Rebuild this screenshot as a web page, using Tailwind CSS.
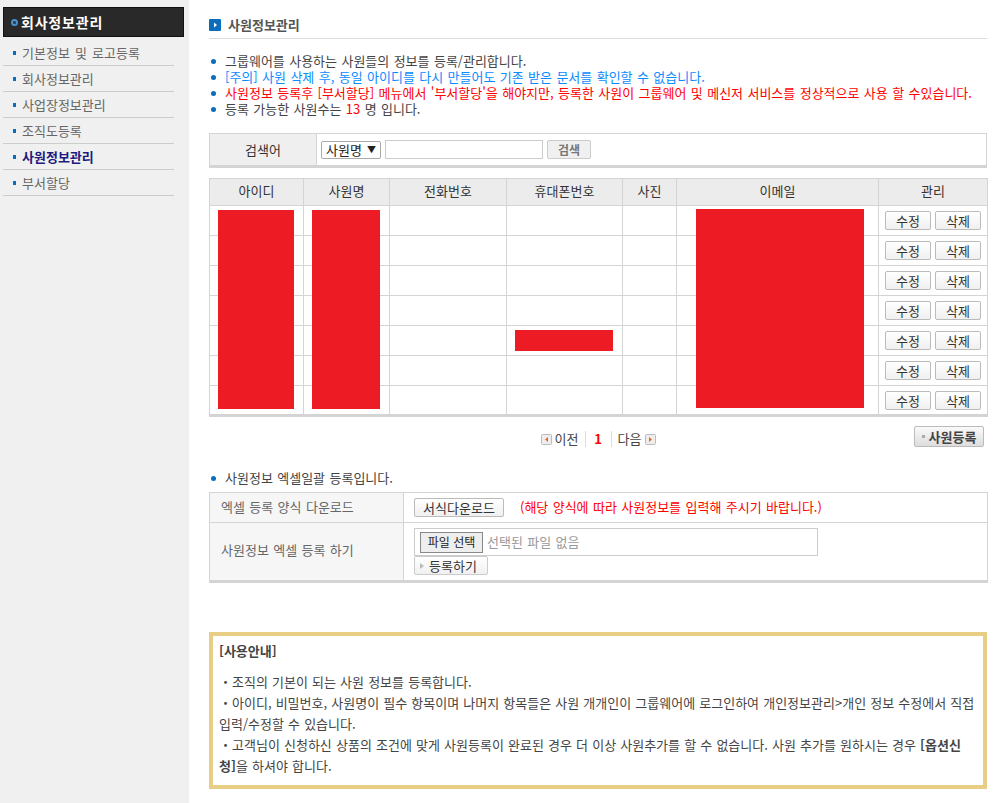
<!DOCTYPE html>
<html lang="ko"><head><meta charset="utf-8"><title>사원정보관리</title>
<script src="https://cdn.jsdelivr.net/npm/@tailwindcss/browser@4"></script></head>
<body class="bg-white">
<div class="flex w-[1005px] h-[803px] overflow-hidden bg-white text-[13px] leading-4 text-[#444] font-['Noto_Sans_CJK_KR','Noto_Sans',sans-serif] [word-spacing:0.75px]">
<aside class="w-[189px] shrink-0 bg-[#f0f0f0] pt-[7px] pl-[3px]">
  <div class="w-[181px] h-[30px] bg-[#292929] border border-[#111] flex items-center pl-[7px] gap-[3px] text-white font-bold text-[14px]">
    <span class="w-[7px] h-[7px] rounded-full border-2 border-[#4a90c8] bg-[#24364a]"></span><span class="tracking-[0.8px]">회사정보관리</span>
  </div>
  <ul class="w-[171px] mt-[3px] text-[#666] [word-spacing:1.5px]">
    <li class="h-[26px] border-b border-[#ccc] flex items-center pl-[10px] gap-[6px]"><span class="w-[3px] h-[4px] bg-[#0a6ebd]"></span>기본정보 및 로고등록</li>
    <li class="h-[26px] border-b border-[#ccc] flex items-center pl-[10px] gap-[6px]"><span class="w-[3px] h-[4px] bg-[#0a6ebd]"></span>회사정보관리</li>
    <li class="h-[26px] border-b border-[#ccc] flex items-center pl-[10px] gap-[6px]"><span class="w-[3px] h-[4px] bg-[#0a6ebd]"></span>사업장정보관리</li>
    <li class="h-[26px] border-b border-[#ccc] flex items-center pl-[10px] gap-[6px]"><span class="w-[3px] h-[4px] bg-[#0a6ebd]"></span>조직도등록</li>
    <li class="h-[26px] border-b border-[#ccc] flex items-center pl-[10px] gap-[6px] font-bold text-[#1c1c80]"><span class="w-[3px] h-[4px] bg-[#0a6ebd]"></span>사원정보관리</li>
    <li class="h-[26px] border-b border-[#ccc] flex items-center pl-[10px] gap-[6px]"><span class="w-[3px] h-[4px] bg-[#0a6ebd]"></span>부서할당</li>
  </ul>
</aside>
<main class="relative w-[778px] ml-[20px] shrink-0">
  <div class="h-[39px] border-b border-[#ddd] flex items-center gap-[7px] pt-[11px] font-bold text-[#555]">
    <svg class="w-[12px] h-[12px]" viewBox="0 0 12 12"><rect width="12" height="12" rx="1" fill="#0a6ebd"/><path d="M5 3.5 8 6 5 8.5Z" fill="#fff"/></svg>
    <span>사원정보관리</span>
  </div>
  <ul class="mt-[14px] h-[64px]">
    <li class="flex items-center h-4 gap-[9px]"><span class="ml-[2px] shrink-0 w-[5px] h-[5px] rounded-full bg-[#0a6ebd]"></span><span>그룹웨어를 사용하는 사원들의 정보를 등록/관리합니다.</span></li>
    <li class="flex items-center h-4 gap-[9px] text-[#0a8cff]"><span class="ml-[2px] shrink-0 w-[5px] h-[5px] rounded-full bg-[#0a6ebd]"></span><span>[주의] 사원 삭제 후, 동일 아이디를 다시 만들어도 기존 받은 문서를 확인할 수 없습니다.</span></li>
    <li class="flex items-center h-4 gap-[9px] text-[#ff0000] whitespace-nowrap"><span class="ml-[2px] shrink-0 w-[5px] h-[5px] rounded-full bg-[#0a6ebd]"></span><span>사원정보 등록후 [부서할당] 메뉴에서 '부서할당'을 해야지만, 등록한 사원이 그룹웨어 및 메신저 서비스를 정상적으로 사용 할 수있습니다.</span></li>
    <li class="flex items-center h-4 gap-[9px]"><span class="ml-[2px] shrink-0 w-[5px] h-[5px] rounded-full bg-[#0a6ebd]"></span><span>등록 가능한 사원수는 <span class="text-[#ff0000]">13</span> 명 입니다.</span></li>
  </ul>
  <div class="mt-[16px] h-[35px] border border-b-[3px] border-[#d4d4d4] flex">
    <div class="w-[107px] bg-[#efefef] border-r border-[#d4d4d4] flex items-center justify-center text-[#333]">검색어</div>
    <div class="flex items-center pl-[4px]">
      <div class="w-[60px] h-[18px] border border-[#aaa] rounded-[2px] bg-white flex items-center justify-between px-[4px] text-[#222]"><span>사원명</span><span class="text-[9px]">▼</span></div>
      <div class="w-[158px] h-[19px] ml-[4px] border border-[#ccc]"></div>
      <button class="w-[44px] h-[19px] ml-[4px] border border-[#ccc] rounded-[2px] bg-[#f0f0f0] text-[12px] leading-none font-bold text-[#777]">검색</button>
    </div>
  </div>
  <table class="mt-[10px] w-[778px] table-fixed border-collapse border-b-[3px] border-[#d4d4d4] text-center">
    <colgroup><col class="w-[94px]"><col class="w-[86px]"><col class="w-[117px]"><col class="w-[116px]"><col class="w-[54px]"><col class="w-[202px]"><col class="w-[109px]"></colgroup>
    <thead><tr class="h-[27px] bg-[#ececec] text-[#333]">
      <th class="border border-[#d4d4d4] font-normal pb-[3px]">아이디</th><th class="border border-[#d4d4d4] font-normal pb-[3px]">사원명</th><th class="border border-[#d4d4d4] font-normal pb-[3px]">전화번호</th><th class="border border-[#d4d4d4] font-normal pb-[3px]">휴대폰번호</th><th class="border border-[#d4d4d4] font-normal pb-[3px]">사진</th><th class="border border-[#d4d4d4] font-normal pb-[3px]">이메일</th><th class="border border-[#d4d4d4] font-normal pb-[3px]">관리</th>
    </tr></thead>
    <tbody>
      <tr class="h-[30px]"><td class="border border-[#d4d4d4]"></td><td class="border border-[#d4d4d4]"></td><td class="border border-[#d4d4d4]"></td><td class="border border-[#d4d4d4]"></td><td class="border border-[#d4d4d4]"></td><td class="border border-[#d4d4d4]"></td><td class="border border-[#d4d4d4]"><div class="flex justify-center gap-[4px] text-[#333]"><button class="w-[46px] h-[19px] border border-[#bbb] rounded-[2px] bg-gradient-to-b from-white to-[#f0f0f0] leading-none">수정</button><button class="w-[46px] h-[19px] border border-[#bbb] rounded-[2px] bg-gradient-to-b from-white to-[#f0f0f0] leading-none">삭제</button></div></td></tr>
      <tr class="h-[30px]"><td class="border border-[#d4d4d4]"></td><td class="border border-[#d4d4d4]"></td><td class="border border-[#d4d4d4]"></td><td class="border border-[#d4d4d4]"></td><td class="border border-[#d4d4d4]"></td><td class="border border-[#d4d4d4]"></td><td class="border border-[#d4d4d4]"><div class="flex justify-center gap-[4px] text-[#333]"><button class="w-[46px] h-[19px] border border-[#bbb] rounded-[2px] bg-gradient-to-b from-white to-[#f0f0f0] leading-none">수정</button><button class="w-[46px] h-[19px] border border-[#bbb] rounded-[2px] bg-gradient-to-b from-white to-[#f0f0f0] leading-none">삭제</button></div></td></tr>
      <tr class="h-[30px]"><td class="border border-[#d4d4d4]"></td><td class="border border-[#d4d4d4]"></td><td class="border border-[#d4d4d4]"></td><td class="border border-[#d4d4d4]"></td><td class="border border-[#d4d4d4]"></td><td class="border border-[#d4d4d4]"></td><td class="border border-[#d4d4d4]"><div class="flex justify-center gap-[4px] text-[#333]"><button class="w-[46px] h-[19px] border border-[#bbb] rounded-[2px] bg-gradient-to-b from-white to-[#f0f0f0] leading-none">수정</button><button class="w-[46px] h-[19px] border border-[#bbb] rounded-[2px] bg-gradient-to-b from-white to-[#f0f0f0] leading-none">삭제</button></div></td></tr>
      <tr class="h-[30px]"><td class="border border-[#d4d4d4]"></td><td class="border border-[#d4d4d4]"></td><td class="border border-[#d4d4d4]"></td><td class="border border-[#d4d4d4]"></td><td class="border border-[#d4d4d4]"></td><td class="border border-[#d4d4d4]"></td><td class="border border-[#d4d4d4]"><div class="flex justify-center gap-[4px] text-[#333]"><button class="w-[46px] h-[19px] border border-[#bbb] rounded-[2px] bg-gradient-to-b from-white to-[#f0f0f0] leading-none">수정</button><button class="w-[46px] h-[19px] border border-[#bbb] rounded-[2px] bg-gradient-to-b from-white to-[#f0f0f0] leading-none">삭제</button></div></td></tr>
      <tr class="h-[30px]"><td class="border border-[#d4d4d4]"></td><td class="border border-[#d4d4d4]"></td><td class="border border-[#d4d4d4]"></td><td class="border border-[#d4d4d4]"></td><td class="border border-[#d4d4d4]"></td><td class="border border-[#d4d4d4]"></td><td class="border border-[#d4d4d4]"><div class="flex justify-center gap-[4px] text-[#333]"><button class="w-[46px] h-[19px] border border-[#bbb] rounded-[2px] bg-gradient-to-b from-white to-[#f0f0f0] leading-none">수정</button><button class="w-[46px] h-[19px] border border-[#bbb] rounded-[2px] bg-gradient-to-b from-white to-[#f0f0f0] leading-none">삭제</button></div></td></tr>
      <tr class="h-[30px]"><td class="border border-[#d4d4d4]"></td><td class="border border-[#d4d4d4]"></td><td class="border border-[#d4d4d4]"></td><td class="border border-[#d4d4d4]"></td><td class="border border-[#d4d4d4]"></td><td class="border border-[#d4d4d4]"></td><td class="border border-[#d4d4d4]"><div class="flex justify-center gap-[4px] text-[#333]"><button class="w-[46px] h-[19px] border border-[#bbb] rounded-[2px] bg-gradient-to-b from-white to-[#f0f0f0] leading-none">수정</button><button class="w-[46px] h-[19px] border border-[#bbb] rounded-[2px] bg-gradient-to-b from-white to-[#f0f0f0] leading-none">삭제</button></div></td></tr>
      <tr class="h-[30px]"><td class="border border-[#d4d4d4]"></td><td class="border border-[#d4d4d4]"></td><td class="border border-[#d4d4d4]"></td><td class="border border-[#d4d4d4]"></td><td class="border border-[#d4d4d4]"></td><td class="border border-[#d4d4d4]"></td><td class="border border-[#d4d4d4]"><div class="flex justify-center gap-[4px] text-[#333]"><button class="w-[46px] h-[19px] border border-[#bbb] rounded-[2px] bg-gradient-to-b from-white to-[#f0f0f0] leading-none">수정</button><button class="w-[46px] h-[19px] border border-[#bbb] rounded-[2px] bg-gradient-to-b from-white to-[#f0f0f0] leading-none">삭제</button></div></td></tr>
    </tbody>
  </table>
  <div class="absolute left-[9px] top-[210px] w-[76px] h-[199px] bg-[#ed1c24]"></div>
  <div class="absolute left-[103px] top-[210px] w-[68px] h-[199px] bg-[#ed1c24]"></div>
  <div class="absolute left-[306px] top-[330px] w-[98px] h-[21px] bg-[#ed1c24]"></div>
  <div class="absolute left-[487px] top-[209px] w-[168px] h-[199px] bg-[#ed1c24]"></div>
  <div class="relative h-[53px] flex items-start justify-center pt-[14px] text-[#444]">
    <div class="flex items-center h-4">
      <svg class="w-[11px] h-[11px] mr-[3px]" viewBox="0 0 11 11"><rect x=".5" y=".5" width="10" height="10" rx="1" fill="#eee" stroke="#bbb"/><path d="M7 3 4 5.5 7 8Z" fill="#e8681a"/></svg>
      <span class="w-[24px] whitespace-nowrap">이전</span>
      <span class="w-px h-4 bg-[#ddd] ml-[6px]"></span><b class="w-[25px] text-center text-[#f00]">1</b><span class="w-px h-4 bg-[#ddd] mr-[6px]"></span>
      <span class="w-[24px] whitespace-nowrap">다음</span>
      <svg class="w-[11px] h-[11px] ml-[3px]" viewBox="0 0 11 11"><rect x=".5" y=".5" width="10" height="10" rx="1" fill="#eee" stroke="#bbb"/><path d="M4 3 7 5.5 4 8Z" fill="#e8681a"/></svg>
    </div>
    <button class="absolute right-[3px] top-[9px] w-[70px] h-[21px] border border-[#bbb] rounded-[2px] bg-gradient-to-b from-[#fafafa] to-[#ddd] flex items-center justify-center gap-[4px] font-bold text-[#444]"><span class="w-[3px] h-[3px] bg-[#aaa]"></span>사원등록</button>
  </div>
  <div class="flex items-center h-4 gap-[9px]"><span class="ml-[2px] shrink-0 w-[5px] h-[5px] rounded-full bg-[#0a6ebd]"></span><span>사원정보 엑셀일괄 등록입니다.</span></div>
  <table class="mt-[6px] w-[778px] table-fixed border-collapse border-b-[3px] border-[#d4d4d4] text-[#666]">
    <colgroup><col class="w-[194px]"><col class="w-[584px]"></colgroup>
    <tr class="h-[30px]"><td class="border border-[#d4d4d4] bg-[#f6f6f6] pl-[11px] pb-[2px]">엑셀 등록 양식 다운로드</td><td class="border border-[#d4d4d4] pl-[10px]"><div class="flex items-center"><button class="w-[90px] h-[19px] border border-[#bbb] rounded-[2px] bg-gradient-to-b from-white to-[#f0f0f0] leading-none text-[#333]">서식다운로드</button><span class="ml-[16px] text-[#f00] pb-[2px]">(해당 양식에 따라 사원정보를 입력해 주시기 바랍니다.)</span></div></td></tr>
    <tr class="h-[59px]"><td class="border border-[#d4d4d4] bg-[#f6f6f6] pl-[11px] pb-[3px]">사원정보 엑셀 등록 하기</td><td class="border border-[#d4d4d4] pl-[10px]">
      <div class="w-[404px] h-[28px] border border-[#ccc] flex items-center pl-[5px]"><button class="w-[63px] h-[21px] border border-[#888] bg-[#eee] text-[#222] text-[12px] leading-none">파일 선택</button><span class="ml-[4px] text-[#999]">선택된 파일 없음</span></div>
      <button class="w-[74px] h-[19px] border border-[#ccc] rounded-[2px] bg-gradient-to-b from-white to-[#f0f0f0] flex items-center gap-[5px] pl-[5px] text-[#333] leading-none"><svg class="w-[4px] h-[6px]" viewBox="0 0 4 6"><path d="M0 0 4 3 0 6Z" fill="#bbb"/></svg>등록하기</button>
    </td></tr>
  </table>
  <section class="mt-[49px] h-[157px] border-4 border-[#e8cd85] px-[6px] pt-[4px] leading-[21px] text-[#444] [word-spacing:0.5px]">
    <p class="font-bold h-[31px]">[사용안내]</p>
    <p>・조직의 기본이 되는 사원 정보를 등록합니다.</p>
    <p>・아이디, 비밀번호, 사원명이 필수 항목이며 나머지 항목들은 사원 개개인이 그룹웨어에 로그인하여 개인정보관리&gt;개인 정보 수정에서 직접 입력/수정할 수 있습니다.</p>
    <p>・고객님이 신청하신 상품의 조건에 맞게 사원등록이 완료된 경우 더 이상 사원추가를 할 수 없습니다. 사원 추가를 원하시는 경우 <b>[옵션신청]</b>을 하셔야 합니다.</p>
  </section>
</main>
</div>
</body></html>
